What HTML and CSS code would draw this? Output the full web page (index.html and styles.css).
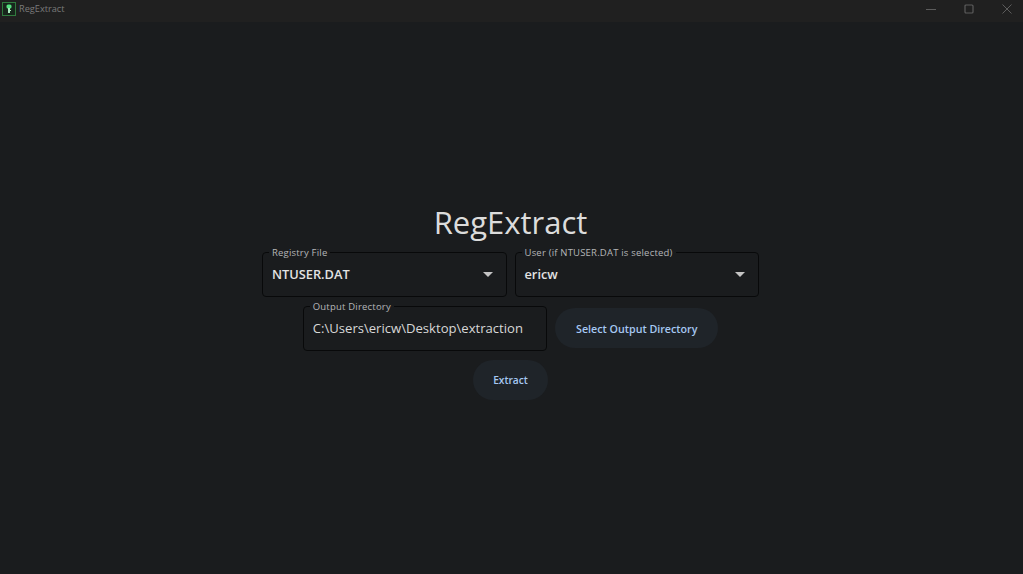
FILE: index.html
```html
<!DOCTYPE html>
<html lang="en">
<head>
    <meta charset="UTF-8">
    <meta name="viewport" content="width=device-width, initial-scale=1.0">
    <title>RegExtract</title>
    <link rel="stylesheet" href="styles.css">
</head>
<body>
    <div class="titlebar">
        <div class="titlebar-left">
            <svg class="app-icon" width="14" height="14" viewBox="0 0 14 14">
                <rect x="0.5" y="0.5" width="13" height="13" fill="#17261c" stroke="#2f7a3e"/>
                <rect x="4.5" y="2.5" width="5" height="4" rx="1.5" fill="#54e07f"/>
                <rect x="6" y="6" width="2" height="5" fill="#a9e8bd"/>
                <rect x="8" y="8" width="1" height="1" fill="#a9e8bd"/>
            </svg>
            <span class="app-name">RegExtract</span>
        </div>
        <div class="window-controls">
            <svg width="10" height="10" viewBox="0 0 10 10"><path d="M0 5.5H10" stroke="#5c5c5c" fill="none"/></svg>
            <svg width="10" height="10" viewBox="0 0 10 10"><rect x="1" y="1" width="8" height="8" rx="1" stroke="#5c5c5c" fill="none" stroke-width="1.2"/></svg>
            <svg width="10" height="10" viewBox="0 0 10 10"><path d="M0.5 0.5L9.5 9.5M9.5 0.5L0.5 9.5" stroke="#5c5c5c" fill="none"/></svg>
        </div>
    </div>

    <div class="content">
        <h1>RegExtract</h1>
        <div class="row">
            <fieldset class="field">
                <legend>Registry File</legend>
                <div class="field-value">
                    <span class="select-text">NTUSER.DAT</span>
                    <span class="caret"></span>
                </div>
            </fieldset>
            <fieldset class="field">
                <legend>User (if NTUSER.DAT is selected)</legend>
                <div class="field-value">
                    <span class="select-text">ericw</span>
                    <span class="caret"></span>
                </div>
            </fieldset>
        </div>
        <div class="row row-output">
            <fieldset class="field">
                <legend>Output Directory</legend>
                <div class="field-value">
                    <span class="input-text">C:\Users\ericw\Desktop\extraction</span>
                </div>
            </fieldset>
            <button class="btn btn-select" type="button">Select Output Directory</button>
        </div>
        <button class="btn btn-extract" type="button">Extract</button>
    </div>
</body>
</html>
```

FILE: styles.css
```css
* {
    box-sizing: border-box;
}
html, body {
    height: 100%;
}
body {
    margin: 0;
    background-color: #1a1c1e;
    font-family: "Open Sans", "Noto Sans", sans-serif;
    color: #e3e3e3;
    overflow: hidden;
}
.titlebar {
    height: 22px;
    background-color: #202020;
    display: flex;
    justify-content: space-between;
    align-items: center;
    padding: 0 11px 5px 2px;
}
.titlebar-left {
    display: flex;
    align-items: center;
    gap: 3px;
}
.app-name {
    font-size: 9.2px;
    color: #7a7a7a;
}
.window-controls {
    display: flex;
    align-items: center;
    gap: 28px;
}
.content {
    display: flex;
    flex-direction: column;
    align-items: center;
    padding-top: 181px;
    padding-right: 2px;
}
h1 {
    margin: 0;
    font-size: 31px;
    font-weight: 400;
    line-height: 38px;
    color: #dcdcdc;
    height: 44px;
}
.row {
    display: flex;
    gap: 8px;
}
.row-output {
    margin-top: 4px;
}
.field {
    width: 244.5px;
    height: 50px;
    margin: 0;
    padding: 0 9px;
    border: 1px solid #08090a;
    border-radius: 4px;
    min-width: 0;
}
.field legend {
    padding: 0 3px;
    margin-left: -3px;
    font-size: 9.5px;
    line-height: 11px;
    color: #b4b6b8;
    letter-spacing: 0.2px;
}
.field-value {
    display: flex;
    justify-content: space-between;
    align-items: center;
    height: 32px;
    padding-right: 4px;
}
.select-text {
    font-size: 12.8px;
    font-weight: 600;
    color: #e3e3e3;
}
.input-text {
    font-size: 13.1px;
    color: #d8d8d8;
}
.caret {
    width: 0;
    height: 0;
    border-left: 5px solid transparent;
    border-right: 5px solid transparent;
    border-top: 5px solid #c4c4c4;
}
.btn {
    height: 40px;
    border: none;
    border-radius: 20px;
    background-color: #1f2429;
    color: #a6c8f2;
    font-family: inherit;
    font-size: 10.2px;
    font-weight: 600;
    padding: 0;
    white-space: nowrap;
}
.btn-select {
    width: 163px;
    margin-top: 7px;
    padding-top: 1px;
    font-size: 10.7px;
}
.btn-extract {
    width: 75px;
    margin-top: 9px;
}
```
